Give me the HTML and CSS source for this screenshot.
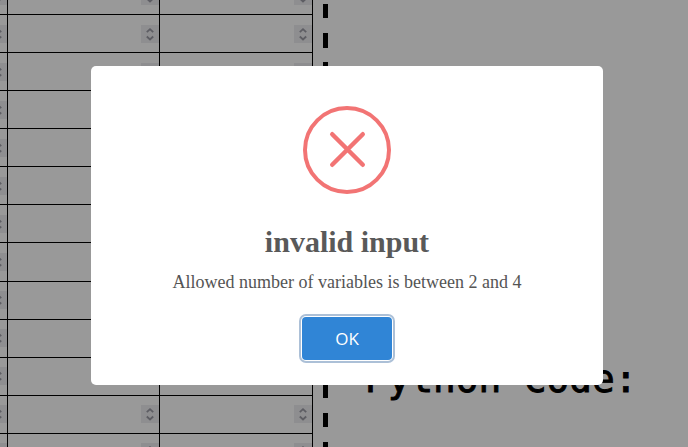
FILE: index.html
```html
<!DOCTYPE html>
<html lang="en">
<head>
<meta charset="utf-8">
<title>Truth table</title>
<link rel="stylesheet" href="styles.css">
</head>
<body>
<svg width="0" height="0" class="defs"><symbol id="spin" viewBox="0 0 18 18"><path d="M5.8 7.2 9 4.2 12.2 7.2M5.8 11.5 9 14.5 12.2 11.5"/></symbol></svg>
<div class="page">
  <div class="grid" id="grid"></div>
  <div class="divider"></div>
  <div class="code"><h2>Python Code:</h2></div>
</div>
<div class="overlay">
  <div class="modal" role="dialog">
    <svg class="icon" viewBox="0 0 88 88"><circle cx="44" cy="44" r="42"/><path d="M29.2 28.2 59.8 58.8M59.8 28.2 29.2 58.8"/></svg>
    <h1>invalid input</h1>
    <p>Allowed number of variables is between 2 and 4</p>
    <button>OK</button>
  </div>
</div>
<script src="grid.js"></script>
</body>
</html>
```
FILE: grid.js
```js
const grid = document.getElementById("grid");
const cell = '<div class="cell"><svg class="spin"><use href="#spin"/></svg></div>';
for (let i = 0; i < 13; i++) {
  const row = document.createElement("div");
  row.className = "row" + (i === 7 ? " tall" : i > 7 ? " late" : "");
  row.innerHTML = cell.repeat(3);
  grid.append(row);
}
```
FILE: styles.css
```css
* { box-sizing: border-box; }
body { margin: 0; background: #999; overflow: hidden; }
.defs { display: none; }
.page { display: flex; height: 447px; overflow: hidden; }
.grid { width: 313px; flex: none; margin-top: -23px; }
.row { display: grid; grid-template-columns: 8px 152px 153px; height: 38px; }
.row.tall { height: 39px; }
.cell { display: flex; justify-content: flex-end; padding-top: 10px; border-right: 1px solid #000; border-bottom: 1px solid #000; overflow: hidden; }
.late .cell { padding-top: 9px; }
.spin { width: 18px; height: 18px; flex: none; background: #8e8e90; fill: none; stroke: #5d5d63; stroke-width: 1.8; }
.divider { width: 5px; flex: none; margin-left: 10px; background: repeating-linear-gradient(#000 0 14.4px, transparent 14.4px 29.18px) 0 4px no-repeat; }
.code { padding: 357px 0 0 37px; }
.code h2 { margin: 0; font: 400 37.7px/44px "DejaVu Sans Mono", monospace; color: #000; white-space: nowrap; -webkit-text-stroke: 0.9px #000; }
.overlay { position: absolute; inset: 0; padding: 66px 0 0 91px; }
.modal { width: 512px; height: 319px; padding-top: 40px; background: #fff; border-radius: 5px; display: flex; flex-direction: column; align-items: center; }
.icon { width: 88px; height: 88px; fill: none; stroke: #f27474; stroke-width: 4; flex: none; }
.icon path { stroke-width: 4.4; stroke-linecap: round; }
h1 { margin: 30px 0 0; font: 700 30px/36px "Liberation Serif", serif; color: #595959; }
p { margin: 11px 0 0; font: 18px/22px "Liberation Serif", serif; color: #545454; white-space: nowrap; }
button { margin: 24px 0 0; width: 90px; height: 43px; padding: 0; border: 0; border-radius: 4px; background: #3085d6; color: #fff; font: 17px/43px "Open Sans", sans-serif; box-shadow: 0 0 0 1px #fff, 0 0 0 3px #acc0d7; }
```
